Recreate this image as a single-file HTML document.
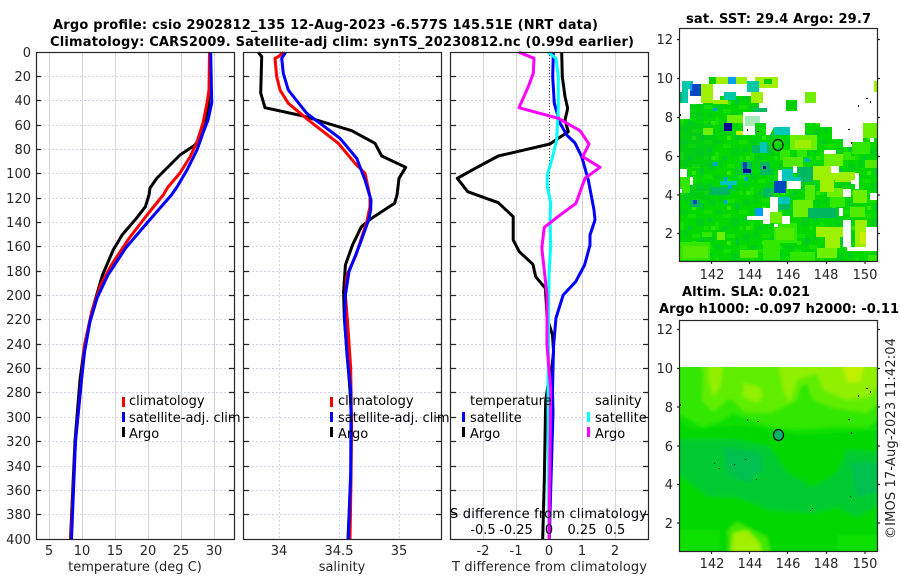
<!DOCTYPE html>
<html><head><meta charset="utf-8"><style>
html,body{margin:0;padding:0;background:#fff}
svg{display:block}
text{font-family:"DejaVu Sans","Liberation Sans",sans-serif;font-size:13px;fill:#262626}
.b{font-weight:bold;fill:#000}
.k{fill:#000}
.e{text-anchor:end}.m{text-anchor:middle}
.l{fill:none;stroke-width:3;stroke-linejoin:round;stroke-linecap:butt}
</style></head><body>
<svg width="900" height="580" viewBox="0 0 900 580" xmlns="http://www.w3.org/2000/svg">
<defs>
<pattern id="n" width="35" height="35" patternUnits="userSpaceOnUse" x="680" y="70">
<rect width="35" height="35" fill="#00d800"/>
<path fill="#00ce18" d="M0 0h8v4H0zM16 8h8v8h-8zM28 24h7v7h-7zM4 20h4v8H4z"/>
<path fill="#14e000" d="M8 4h8v4H8zM24 0h8v4h-8zM0 12h4v8H0zM12 24h8v4h-8zM24 16h4v4h-4z"/>
<path fill="#00c830" d="M28 8h4v4h-4zM8 16h4v4H8zM20 28h4v7h-4z"/>
<path fill="#30e600" d="M12 31h4v4h-4zM31 16h4v4h-4z"/>
<path fill="#10e010" d="M2 6h1v1H2zM10 10h1v1h-1zM6 14h1v1H6zM19 4h1v1h-1zM26 12h1v1h-1zM15 20h1v1h-1zM22 24h1v1h-1zM2 30h1v1H2zM9 30h1v1H9zM32 3h1v1h-1zM30 30h1v1h-1z"/>
</pattern>
<filter id="s" x="-5%" y="-5%" width="110%" height="110%"><feGaussianBlur stdDeviation="1.6"/></filter>
<clipPath id="c2"><rect x="680" y="367" width="197" height="184"/></clipPath>
</defs>
<rect width="900" height="580" fill="#fff"/>

<!-- Grids -->
<g fill="none" stroke-width="1">
<path stroke="#ccd4f2" stroke-dasharray="2 2" d="M36 76.5H234M36 100.5H234M36 125.5H234M36 149.5H234M36 173.5H234M36 198.5H234M36 222.5H234M36 246.5H234M36 271.5H234M36 295.5H234M36 319.5H234M36 344.5H234M36 368.5H234M36 392.5H234M36 417.5H234M36 441.5H234M36 466.5H234M36 490.5H234M36 514.5H234M244 76.5H441M244 100.5H441M244 125.5H441M244 149.5H441M244 173.5H441M244 198.5H441M244 222.5H441M244 246.5H441M244 271.5H441M244 295.5H441M244 319.5H441M244 344.5H441M244 368.5H441M244 392.5H441M244 417.5H441M244 441.5H441M244 466.5H441M244 490.5H441M244 514.5H441M451 76.5H648M451 100.5H648M451 125.5H648M451 149.5H648M451 173.5H648M451 198.5H648M451 222.5H648M451 246.5H648M451 271.5H648M451 295.5H648M451 319.5H648M451 344.5H648M451 368.5H648M451 392.5H648M451 417.5H648M451 441.5H648M451 466.5H648M451 490.5H648M451 514.5H648"/>
<path stroke="#ecd8d0" stroke-dasharray="2 6" d="M36 76.5H234M36 125.5H234M36 173.5H234M36 222.5H234M36 271.5H234M36 319.5H234M36 368.5H234M36 417.5H234M36 466.5H234M36 514.5H234M451 125.5H648M451 222.5H648M451 319.5H648M451 417.5H648"/>
<path stroke="#ccd4f2" stroke-dasharray="2 2" d="M49.5 52V539M82.5 52V539M115.5 52V539M148.5 52V539M181.5 52V539M214.5 52V539M279.5 52V539M339.5 52V539M399.5 52V539M483.5 52V539M516.5 52V539M549.5 52V539M582.5 52V539M615.5 52V539"/>
<path stroke="#ecd4c8" stroke-dasharray="2 2" stroke-dashoffset="2" d="M49.5 52V539M82.5 52V539M115.5 52V539M148.5 52V539M181.5 52V539M214.5 52V539M483.5 52V539M516.5 52V539M582.5 52V539M615.5 52V539"/>
<path stroke="#3a3a3a" stroke-dasharray="1 2" d="M549.5 52V539"/>
</g>

<!-- Temperature -->
<polyline class="l" stroke="#000" points="210,52 209.5,90 208,110 204,125 200,137 195,145 180,155 167,168 157,178 150,188 149,195 145.4,206.7 136.4,218.3 122.1,235 113.2,250 102.5,275 91.8,311.7 84.6,345 80,380 75,441 70.5,539"/>
<polyline class="l" stroke="#f00" points="209.5,52 209,90 207,103 203,123 197,142 190,157 180,173 168,187 163.2,195 147,215 129.3,238 111.4,265 100.7,285 91.8,311.7 84.6,345 81,385 75.5,441 71,539"/>
<polyline class="l" stroke="#00f" points="210.7,52 211.7,103 208,120 203,133 197,150 187,170 177,187 171.4,195 147,223 125.7,248 107.9,275 97.1,298 90,321.7 84.6,351.7 81.5,380 75.5,441 71.5,539"/>

<!-- Salinity -->
<polyline class="l" stroke="#000" points="258.3,52.3 261.7,56.7 260.7,93 265,107.7 303.3,116 351.7,130.7 375,143.3 381.7,156 405.7,167.3 399,178.3 397,195 394.6,203.3 372,218 361.4,226.7 352.5,245 345.4,265 343.6,291.7 344.3,318.3 346.4,345 350,390 351.5,420 351,470 348,539"/>
<polyline class="l" stroke="#f00" points="283.3,52.3 279.3,56 275,58.3 276.7,76.7 280,90 288.3,103.3 308.3,120 338.3,143.3 355,163.3 365,173.3 370,196.7 370,206.7 366.8,221.7 356,255 347,275 345.4,295 348,328 350.7,368 351.4,420 351,480 350,539"/>
<polyline class="l" stroke="#00f" points="285.7,52.3 281.7,58.3 283.3,73.3 288.3,90 306.7,113.3 340,138.3 356.7,158.3 365,180 371,200 370.7,210 368.6,220 359.6,245 349,271.7 345.4,295 344.6,318 347,355 350.7,390 351,413 350.7,473 348.3,539"/>

<!-- Differences -->
<polyline class="l" stroke="#000" points="561.7,52.3 562.3,76.7 565,96.7 567.7,108.3 565,120 568.3,131.7 558.3,138.3 550,144 498.3,156 478.3,166.7 457.3,178.3 467.7,191.7 498.3,202.7 513.2,216.7 513.2,240 519.3,251.7 532.9,264.3 535.7,276.7 545.4,288.3 546.4,305 547,318 552.5,335 553.6,351.7 550.7,378 548.3,383 545.7,400 545,440 544.3,480 542.7,539"/>
<polyline class="l" stroke="#00f" points="553.3,52.3 552.7,76.7 554.3,103.3 560,123 566.7,135 575,143 581.7,156.7 588.3,180 594,210 595,220 590,235 590,245 584.6,265 575.7,281.7 563.2,295 556,318 553.6,345 552.5,390 553,413 551,480 549.3,539"/>
<polyline class="l" stroke="#0ff" points="548.3,52.3 556,58.3 558.3,76.7 558.3,106.7 556.7,140 551.7,160 547.3,175 547.3,186.7 550.7,203 550,220 550.7,245 549,275 548,390 548.5,480 549,539"/>
<polyline class="l" stroke="#f0f" points="519,52.3 534,58.3 533.3,73.3 528.3,86.7 519,107.7 558.3,118.3 580,130.7 589,144 582.7,156.7 600,167.3 585,178.3 576,203.3 557.9,216.7 544.3,227.3 541.8,248 547,295 547,345 550.7,390 550,460 549,539"/>

<!-- Axes panels -->
<g fill="none" stroke="#262626" stroke-width="1.2">
<rect x="36.5" y="52.5" width="198" height="487"/>
<rect x="243.5" y="52.5" width="198" height="487"/>
<rect x="450.5" y="52.5" width="198" height="487"/>
<path d="M36 76.5h5M36 100.5h5M36 125.5h5M36 149.5h5M36 173.5h5M36 198.5h5M36 222.5h5M36 246.5h5M36 271.5h5M36 295.5h5M36 319.5h5M36 344.5h5M36 368.5h5M36 392.5h5M36 417.5h5M36 441.5h5M36 466.5h5M36 490.5h5M36 514.5h5"/>
<path d="M234 76.5h-5M234 100.5h-5M234 125.5h-5M234 149.5h-5M234 173.5h-5M234 198.5h-5M234 222.5h-5M234 246.5h-5M234 271.5h-5M234 295.5h-5M234 319.5h-5M234 344.5h-5M234 368.5h-5M234 392.5h-5M234 417.5h-5M234 441.5h-5M234 466.5h-5M234 490.5h-5M234 514.5h-5"/>
<path d="M244 76.5h5M244 100.5h5M244 125.5h5M244 149.5h5M244 173.5h5M244 198.5h5M244 222.5h5M244 246.5h5M244 271.5h5M244 295.5h5M244 319.5h5M244 344.5h5M244 368.5h5M244 392.5h5M244 417.5h5M244 441.5h5M244 466.5h5M244 490.5h5M244 514.5h5"/>
<path d="M441 76.5h-5M441 100.5h-5M441 125.5h-5M441 149.5h-5M441 173.5h-5M441 198.5h-5M441 222.5h-5M441 246.5h-5M441 271.5h-5M441 295.5h-5M441 319.5h-5M441 344.5h-5M441 368.5h-5M441 392.5h-5M441 417.5h-5M441 441.5h-5M441 466.5h-5M441 490.5h-5M441 514.5h-5"/>
<path d="M451 76.5h5M451 100.5h5M451 125.5h5M451 149.5h5M451 173.5h5M451 198.5h5M451 222.5h5M451 246.5h5M451 271.5h5M451 295.5h5M451 319.5h5M451 344.5h5M451 368.5h5M451 392.5h5M451 417.5h5M451 441.5h5M451 466.5h5M451 490.5h5M451 514.5h5"/>
<path d="M648 76.5h-5M648 100.5h-5M648 125.5h-5M648 149.5h-5M648 173.5h-5M648 198.5h-5M648 222.5h-5M648 246.5h-5M648 271.5h-5M648 295.5h-5M648 319.5h-5M648 344.5h-5M648 368.5h-5M648 392.5h-5M648 417.5h-5M648 441.5h-5M648 466.5h-5M648 490.5h-5M648 514.5h-5"/>
</g>

<!-- Titles -->
<text class="b" x="53" y="29" textLength="545" lengthAdjust="spacing">Argo profile: csio 2902812_135 12-Aug-2023 -6.577S 145.51E (NRT data)</text>
<text class="b" x="50" y="46" textLength="584" lengthAdjust="spacing">Climatology: CARS2009. Satellite-adj clim: synTS_20230812.nc (0.99d earlier)</text>

<!-- Y labels -->
<g class="e">
<text class="e" x="31" y="57">0</text><text class="e" x="31" y="81">20</text><text class="e" x="31" y="105">40</text><text class="e" x="31" y="130">60</text><text class="e" x="31" y="154">80</text><text class="e" x="31" y="178">100</text><text class="e" x="31" y="203">120</text><text class="e" x="31" y="227">140</text><text class="e" x="31" y="251">160</text><text class="e" x="31" y="276">180</text><text class="e" x="31" y="300">200</text><text class="e" x="31" y="324">220</text><text class="e" x="31" y="349">240</text><text class="e" x="31" y="373">260</text><text class="e" x="31" y="397">280</text><text class="e" x="31" y="422">300</text><text class="e" x="31" y="446">320</text><text class="e" x="31" y="471">340</text><text class="e" x="31" y="495">360</text><text class="e" x="31" y="519">380</text><text class="e" x="31" y="544">400</text>
</g>

<!-- X labels -->
<text class="m" x="49" y="555">5</text><text class="m" x="82" y="555">10</text><text class="m" x="115" y="555">15</text><text class="m" x="148" y="555">20</text><text class="m" x="181" y="555">25</text><text class="m" x="214" y="555">30</text>
<text class="m" x="135" y="571">temperature (deg C)</text>
<text class="m" x="279" y="555">34</text><text class="m" x="339" y="555">34.5</text><text class="m" x="399" y="555">35</text>
<text class="m" x="342" y="571">salinity</text>
<text class="m" x="483" y="555">-2</text><text class="m" x="516" y="555">-1</text><text class="m" x="549" y="555">0</text><text class="m" x="582" y="555">1</text><text class="m" x="615" y="555">2</text>
<text x="452" y="571" textLength="195" lengthAdjust="spacing">T difference from climatology</text>
<text class="k" x="450" y="518" textLength="197" lengthAdjust="spacing">S difference from climatology</text>
<text class="k m" x="483" y="534">-0.5</text><text class="k m" x="516" y="534">-0.25</text><text class="k m" x="549" y="534">0</text><text class="k m" x="582" y="534">0.25</text><text class="k m" x="615" y="534">0.5</text>

<!-- Legends -->
<g stroke-width="3" fill="none">
<path stroke="#f00" d="M123.5 397v10M331.5 397v10"/>
<path stroke="#00f" d="M123.5 412v10M331.5 412v10M463.5 412v10"/>
<path stroke="#000" d="M123.5 427v10M331.5 427v10M463.5 427v10"/>
<path stroke="#0ff" d="M588.5 412v10"/>
<path stroke="#f0f" d="M588.5 427v10"/>
</g>
<text class="k" x="129" y="405">climatology</text><text class="k" x="129" y="422">satellite-adj. clim</text><text class="k" x="129" y="438">Argo</text>
<text class="k" x="338" y="405">climatology</text><text class="k" x="338" y="422">satellite-adj. clim</text><text class="k" x="338" y="438">Argo</text>
<text class="k" x="470" y="405">temperature</text><text class="k" x="470" y="422">satellite</text><text class="k" x="470" y="438">Argo</text>
<text class="k" x="595" y="405">salinity</text><text class="k" x="595" y="422">satellite</text><text class="k" x="595" y="438">Argo</text>

<!-- SST map -->
<path fill="url(#n)" d="M680 119H690V104H703V100H720V96H751V103H759V112H743V135H755V123H766V135H770L774 127H790V135H805V123H820V127H832V139H843V147H852V142H863V123H877V261H680Z"/>
<path fill="#00c430" opacity=".35" d="M680 123h33v44h-33zM690 104h13v11h-13zM697 135h20v12h-20zM720 123h13v12h-13zM680 185h30v15h-30zM745 116h15v10h-15z"/>
<path fill="#6cf000" d="M790 135h27v15h-27zM824 154h19v12h-19zM827 188h16v9h-16zM770 212h12v11h-12zM793 200h20v17h-20zM853 190h14v13h-14zM703 128h10v7h-10zM727 115h16v8h-16zM717 232h8v8h-8zM817 248h20v10h-20zM863 123h14v15h-14z"/>
<path fill="#9cf000" d="M813 166h22v14h-22zM835 172h20v10h-20zM820 180h14v12h-14zM795 140h16v8h-16zM855 220h12v27h-12zM816 227h27v10h-27zM825 237h15v11h-15zM701 96h12v7h-12zM713 100h15v4h-15z"/>
<path fill="#30e800" d="M852 142h18v12h-18zM680 177h10v16h-10zM830 197h15v10h-15zM797 150h10v7h-10zM680 242h30v18h-30zM763 240h17v20h-17zM774 223h23v20h-23zM702 232h10v5h-10zM790 252h25v9h-25zM868 255h9v6h-9zM843 152h8v8h-8zM780 150h10v10h-10z"/>
<path fill="#52ea00" d="M683 246h25v12h-25zM776 228h18v12h-18zM783 157h20v10h-20zM850 207h15v10h-15zM740 250h18v8h-18zM805 185h10v15h-10zM865 160h12v8h-12z"/>
<path fill="#c8f000" d="M736 131h7v4h-7zM830 166h6v6h-6zM860 232h6v12h-6z"/>
<path fill="#00b860" d="M752 145h18v8h-18zM741 162h11v13h-11zM760 162h10v13h-10zM763 188h10v9h-10zM797 167h16v15h-16zM808 208h29v10h-29zM710 187h20v8h-20zM690 200h10v7h-10zM778 204h12v6h-12zM753 108h14v4h-14zM680 92h5v11h-5z"/>

<!-- SST isolated cells -->
<path fill="#a0f000" d="M709 77h38v7h-38zM755 77h23v11h-23zM701 84h12v19h-12zM751 92h12v11h-12zM874 81h3v11h-3z"/>
<path fill="#00d000" d="M709 77h7v7h-7zM764 79h8v5h-8zM786 100h11v11h-11z"/>
<path fill="#70f000" d="M805 92h11v11h-11z"/>
<path fill="#00c8a8" d="M682 81h11v8h-11zM747 81h12v11h-12zM724 92h12v8h-12zM682 89h6v14h-6z"/>
<path fill="#00c8b8" d="M774 127h16v8h-16zM782 169h11v12h-11zM793 177h8v8h-8zM720 181h17v4h-17zM760 142h7v11h-7zM778 197h12v7h-12zM745 169h4v5h-4z"/>
<path fill="#0048c0" d="M690 84h11v12h-11zM774 181h12v12h-12zM743 162h4v7h-4zM693 200h4v4h-4z"/>
<path fill="#000098" d="M724 123h8v8h-8zM743 169h8v4h-8zM763 166h3v3h-3zM728 127h4v4h-4z"/>
<path fill="#00a0f0" d="M728 77h8v7h-8zM755 208h8v8h-8zM713 162h4v4h-4zM745 177h3v4h-3zM805 158h4v4h-4zM724 177h3v4h-3zM728 185h4v4h-4zM724 200h3v4h-3zM713 108h4v3h-4zM690 84h2v7h-2z"/>

<!-- White holes -->
<path fill="#fff" d="M680 169h7v8h-7zM690 177h3v8h-3zM680 189h2v4h-2zM770 197h8v15h-8zM763 208h7v16h-7zM747 216h16v4h-16zM774 224h4v3h-4zM782 216h8v8h-8zM787 181h14v8h-14zM831 166h8v7h-8zM843 189h8v8h-8zM870 193h7v7h-7zM855 173h4v16h-4zM851 180h8v4h-8zM839 208h4v8h-4zM843 220h8v27h-8zM866 227h11v24h-11zM847 247h30v4h-30zM824 150h12v4h-12zM778 170h4v11h-4zM793 166h4v7h-4zM870 138h4v4h-4z"/>

<g fill="#000">
<path d="M680 114h1v2h-1zM747 129h1v2h-1zM757 131h2v1h-2zM848 129h2v1h-2zM851 142h1v2h-1zM866 98h2v1h-2zM870 101h1v2h-1zM858 105h1v2h-1z"/>
</g>
<ellipse cx="778" cy="145" rx="5" ry="5.5" fill="none" stroke="#000" stroke-width="1.2"/>

<!-- SLA map -->
<g clip-path="url(#c2)">
<g filter="url(#s)">
<rect x="670" y="355" width="217" height="206" fill="#00d800"/>
<path fill="#10e000" d="M670 410L690 430 740 425 800 435 887 430V355H670ZM670 530H720V561H670ZM838 535H887V561H838Z"/>
<path fill="#30e800" d="M670 408L703 427 723 420 733 413 770 427 797 429 837 427 867 428 887 412V355H670Z"/>
<path fill="#60ee00" d="M696 355L703 373 702 400 713 412 730 398 745 412 770 413 783 407 797 400 800 387 807 383 813 400 833 408 867 413 887 395V355Z"/>
<path fill="#90f000" d="M708 355V380L713 397 720 387 725 355ZM743 383V397L757 403 763 397 760 387ZM777 355L783 390 790 403 797 380 817 373 823 390 847 400 870 397 887 370V355Z"/>
<path fill="#c0f000" d="M840 355L847 382 860 382 867 355Z"/>
<path fill="#00cc30" d="M670 440L737 440 770 447 787 473 813 487 837 473 847 450 887 453V500L857 517 837 507 813 513 770 510 737 497 710 497 690 483 670 467Z"/>
<path fill="#00c050" d="M723 447L760 453 763 470 747 483 727 473ZM850 463H887V490L857 497Z"/>
<path fill="#40e800" d="M728 561V530L737 522 767 537 773 561Z"/>
<path fill="#a0f000" d="M730 561L733 533 747 530 760 543 763 561Z"/>
</g>
</g>
<path fill="#000" d="M680 404h1v2h-1zM747 419h1v2h-1zM757 421h2v1h-2zM848 419h2v1h-2zM851 432h1v2h-1zM866 388h2v1h-2zM870 391h1v2h-1zM858 395h1v2h-1zM714 463h1v1h-1zM734 464h1v1h-1zM745 459h1v1h-1zM719 468h1v1h-1zM756 479h1v1h-1zM810 510h1v1h-1zM812 508h1v1h-1zM850 496h1v1h-1z"/>
<ellipse cx="778.5" cy="435" rx="5" ry="5.5" fill="#00b868" stroke="#000" stroke-width="1.2"/>

<!-- Map axes -->
<g fill="none" stroke="#262626" stroke-width="1.2">
<rect x="679.5" y="28.5" width="198" height="233"/>
<rect x="679.5" y="320.5" width="198" height="231"/>
<path d="M877 39.5h3M877 78.5h3M877 117.5h3M877 156.5h3M877 195h3M877 233.5h3M677 39.5h3M677 78.5h3M677 117.5h3M677 156.5h3M677 195h3M677 233.5h3"/>
<path d="M711.5 261v3M749.5 261v3M787.5 261v3M826.5 261v3M865 261v3"/>
<path d="M877 329.5h3M877 368.5h3M877 407h3M877 446h3M877 484.5h3M877 523h3M677 329.5h3M677 368.5h3M677 407h3M677 446h3M677 484.5h3M677 523h3"/>
<path d="M711.5 551v3M749.5 551v3M787.5 551v3M826.5 551v3M865 551v3"/>
</g>

<text class="b" x="686" y="23" textLength="185" lengthAdjust="spacing">sat. SST: 29.4 Argo: 29.7</text>
<text class="b" x="682" y="296" textLength="128" lengthAdjust="spacing">Altim. SLA: 0.021</text>
<text class="b" x="659" y="313" textLength="240" lengthAdjust="spacing">Argo h1000: -0.097 h2000: -0.11</text>

<text class="e" x="673" y="44">12</text><text class="e" x="673" y="83">10</text><text class="e" x="673" y="122">8</text><text class="e" x="673" y="161">6</text><text class="e" x="673" y="200">4</text><text class="e" x="673" y="238">2</text>
<text class="m" x="712" y="279">142</text><text class="m" x="750" y="279">144</text><text class="m" x="788" y="279">146</text><text class="m" x="826" y="279">148</text><text class="m" x="865" y="279">150</text>
<text class="e" x="673" y="334">12</text><text class="e" x="673" y="373">10</text><text class="e" x="673" y="412">8</text><text class="e" x="673" y="451">6</text><text class="e" x="673" y="489">4</text><text class="e" x="673" y="528">2</text>
<text class="m" x="712" y="568">142</text><text class="m" x="750" y="568">144</text><text class="m" x="788" y="568">146</text><text class="m" x="826" y="568">148</text><text class="m" x="865" y="568">150</text>

<text transform="translate(895 539) rotate(-90)" textLength="201" lengthAdjust="spacing">©IMOS 17-Aug-2023 11:42:04</text>
</svg>
</body></html>
